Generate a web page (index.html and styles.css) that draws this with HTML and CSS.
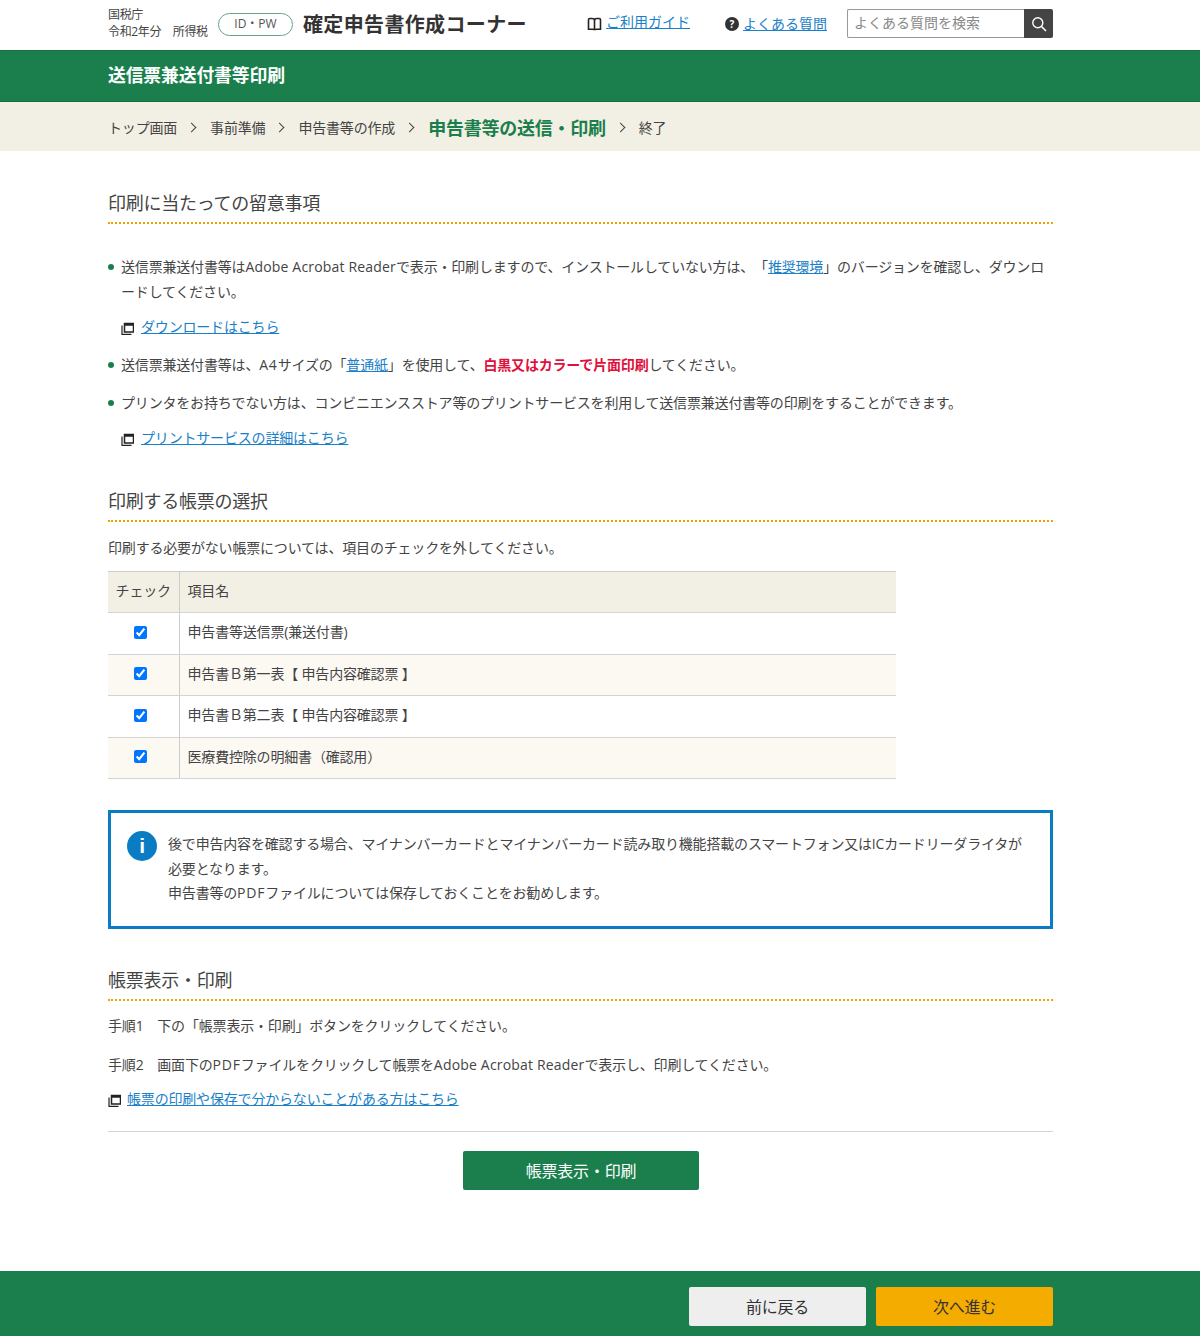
FILE: index.html
```html
<!DOCTYPE html>
<html lang="ja">
<head>
<meta charset="utf-8">
<title>送信票兼送付書等印刷</title>
<link rel="stylesheet" href="styles.css">
</head>
<body>
<div class="page">
  <header class="top">
    <div class="wrap top-in">
      <div class="agency"><div>国税庁</div><div>令和2年分　所得税</div></div>
      <span class="pill">ID・PW</span>
      <div class="site">確定申告書作成コーナー</div>
      <a class="tool guide" href="#"><svg class="tool-ic" viewBox="0 0 15 14" width="15" height="14"><path d="M7.500 3.500C7.500 2 6.500 1.500 5 1.500H2.800C2 1.500 1.500 2 1.500 2.800V12.200H5.500C6.800 12.200 7.500 12.700 7.500 13.300C7.500 12.700 8.200 12.200 9.500 12.200H13.500V2.800C13.500 2 13 1.500 12.200 1.500H10C8.500 1.500 7.500 2 7.500 3.500ZM7.500 3.500V13" fill="none" stroke="#222" stroke-width="1.600"/></svg><span class="lnk up">ご利用ガイド</span></a>
      <a class="tool faq" href="#"><span class="q">?</span><span class="lnk">よくある質問</span></a>
      <form class="search">
        <input class="search-in" type="text" placeholder="よくある質問を検索">
        <button class="search-btn" type="button" aria-label="検索"><svg viewBox="0 0 16 16" width="16" height="16"><circle cx="6.800" cy="6.800" r="5" fill="none" stroke="#fff" stroke-width="1.400"/><path d="M10.500 10.500L15 15" stroke="#fff" stroke-width="1.600"/></svg></button>
      </form>
    </div>
  </header>
  <div class="band"><div class="wrap"><h1 class="band-title">送信票兼送付書等印刷</h1></div></div>
  <nav class="crumbs">
    <div class="wrap crumbs-in">
      <span>トップ画面</span><i class="chev"></i>
      <span>事前準備</span><i class="chev"></i>
      <span>申告書等の作成</span><i class="chev"></i>
      <strong class="now">申告書等の送信・印刷</strong><i class="chev"></i>
      <span>終了</span>
    </div>
  </nav>
  <main class="wrap main">
    <h2 class="head first">印刷に当たっての留意事項</h2>
    <ul class="notes">
      <li>送信票兼送付書等は<span class="en">Adobe Acrobat Reader</span>で表示・印刷しますので、インストールしていない方は、「<a href="#">推奨環境</a>」のバージョンを確認し、ダウンロードしてください。
        <p class="ext"><svg class="win" viewBox="0 0 13 13" width="13" height="13"><path d="M3.500 1.500h9v8.500h-9zM3.500 3h9" fill="none" stroke="#222" stroke-width="1.500"/><path d="M1 3.500V12.300h9.500" fill="none" stroke="#222" stroke-width="1.200"/></svg><a href="#">ダウンロードはこちら</a></p></li>
      <li>送信票兼送付書等は、<span class="en2">A4</span>サイズの「<a href="#">普通紙</a>」を使用して、<strong class="red">白黒又はカラーで片面印刷</strong>してください。</li>
      <li>プリンタをお持ちでない方は、コンビニエンスストア等のプリントサービスを利用して送信票兼送付書等の印刷をすることができます。
        <p class="ext"><svg class="win" viewBox="0 0 13 13" width="13" height="13"><path d="M3.500 1.500h9v8.500h-9zM3.500 3h9" fill="none" stroke="#222" stroke-width="1.500"/><path d="M1 3.500V12.300h9.500" fill="none" stroke="#222" stroke-width="1.200"/></svg><a href="#">プリントサービスの詳細はこちら</a></p></li>
    </ul>
    <h2 class="head second">印刷する帳票の選択</h2>
    <p class="lead">印刷する必要がない帳票については、項目のチェックを外してください。</p>
    <table class="forms">
      <thead><tr><th class="c1">チェック</th><th>項目名</th></tr></thead>
      <tbody>
        <tr><td class="c1"><input type="checkbox" checked></td><td>申告書等送信票(兼送付書)</td></tr>
        <tr class="alt"><td class="c1"><input type="checkbox" checked></td><td>申告書Ｂ第一表【 申告内容確認票 】</td></tr>
        <tr><td class="c1"><input type="checkbox" checked></td><td>申告書Ｂ第二表【 申告内容確認票 】</td></tr>
        <tr class="alt"><td class="c1"><input type="checkbox" checked></td><td>医療費控除の明細書（確認用）</td></tr>
      </tbody>
    </table>
    <div class="info">
      <span class="info-ic">i</span>
      <p>後で申告内容を確認する場合、マイナンバーカードとマイナンバーカード読み取り機能搭載のスマートフォン又はICカードリーダライタが必要となります。<br>申告書等の<span class="en2">PDF</span>ファイルについては保存しておくことをお勧めします。</p>
    </div>
    <h2 class="head third">帳票表示・印刷</h2>
    <p class="step">手順1　下の「帳票表示・印刷」ボタンをクリックしてください。</p>
    <p class="step">手順2　画面下の<span class="en2">PDF</span>ファイルをクリックして帳票を<span class="en">Adobe Acrobat Reader</span>で表示し、印刷してください。</p>
    <p class="ext flush"><svg class="win" viewBox="0 0 13 13" width="13" height="13"><path d="M3.500 1.500h9v8.500h-9zM3.500 3h9" fill="none" stroke="#222" stroke-width="1.500"/><path d="M1 3.500V12.300h9.500" fill="none" stroke="#222" stroke-width="1.200"/></svg><a href="#">帳票の印刷や保存で分からないことがある方はこちら</a></p>
    <div class="act"><button class="print" type="button">帳票表示・印刷</button></div>
  </main>
  <footer class="foot">
    <div class="wrap foot-in">
      <button class="fbtn back" type="button">前に戻る</button>
      <button class="fbtn next" type="button">次へ進む</button>
    </div>
  </footer>
</div>
</body>
</html>
```

FILE: styles.css
```css
* { box-sizing: border-box; }
html, body { margin: 0; padding: 0; }
body {
  font-family: "Open Sans", "Noto Sans CJK JP", sans-serif;
  font-size: 14px;
  color: #444;
  background: #fff;
  letter-spacing: -0.18px;
  text-spacing-trim: space-all;
}
a { color: #1a80c8; text-decoration: underline; }
.en { letter-spacing: 0.18px; }
.en2 { letter-spacing: 0.8px; }
.page { min-height: 1336px; display: flex; flex-direction: column; }
.wrap { width: 945px; margin-left: 108px; }

.top { height: 50px; }
.top-in { display: flex; align-items: center; height: 48px; }
.agency { font-size: 12px; line-height: 17px; width: 110px; color: #444; letter-spacing: -0.35px; white-space: nowrap; margin-top: -2px; }
.pill { width: 75px; height: 23px; border: 1.500px solid #62a883; border-radius: 12px; font-size: 12px; line-height: 20px; text-align: center; color: #555; letter-spacing: 0; }
.site { font-size: 20px; font-weight: 700; color: #333; margin-left: 10px; width: 284px; white-space: nowrap; letter-spacing: 0.35px; padding-bottom: 2px; }
.tool { display: flex; align-items: center; text-decoration: none; font-size: 14px; letter-spacing: 0; }
.lnk { color: #1a80c8; text-decoration: underline; padding-bottom: 2px; }
.lnk.up { padding-bottom: 6px; }
.guide { width: 138px; gap: 4px; }
.faq { width: 122px; gap: 4px; }
.q { width: 14px; height: 14px; border-radius: 50%; background: #333; color: #fff; font-size: 10px; font-weight: 700; line-height: 14px; text-align: center; }
.search { display: flex; width: 206px; height: 29px; margin-top: -1px; }
.search-in { width: 177px; height: 29px; border: 1px solid #999; border-right: 0; border-radius: 2px 0 0 2px; padding: 0 6px 3px; font: 14px "Open Sans", "Noto Sans CJK JP", sans-serif; letter-spacing: 0; }
.search-in::placeholder { color: #888; opacity: 1; }
.search-btn { width: 30px; height: 29px; border: 0; padding: 0; background: #444; border-radius: 0 2px 2px 0; display: flex; align-items: center; justify-content: center; }

.band { height: 52px; background: #1b7f4d; border-top: 1px solid #157040; border-bottom: 1px solid #157040; display: flex; align-items: center; padding-bottom: 4px; }
.band-title { margin: 0; color: #fff; font-size: 17.800px; font-weight: 700; letter-spacing: -0.1px; }

.crumbs { height: 49px; background: #f2efe5; }
.crumbs-in { display: flex; align-items: center; height: 100%; color: #444; white-space: nowrap; }
.now { color: #1b7f4d; font-size: 18px; letter-spacing: -0.25px; }
.chev { display: block; width: 7px; height: 7px; border-top: 1.500px solid #444; border-right: 1.500px solid #444; transform: rotate(45deg); margin: 1px 15px 0 11px; }

.main { flex: 1; }
.head { margin: 0; font-size: 18px; font-weight: 400; line-height: 26px; color: #444; padding-bottom: 6px; border-bottom: 2px dotted #f0a000; letter-spacing: -0.25px; }
.head.first { margin-top: 39px; }
.head.second { margin-top: 38px; }
.head.third { margin-top: 38px; }

.notes { list-style: none; margin: 30px 0 0; padding: 0; }
.notes li { position: relative; padding-left: 13px; line-height: 25px; margin-bottom: 13px; }
.notes li::before { content: ""; position: absolute; left: 0; top: 10px; width: 6px; height: 6px; border-radius: 50%; background: #1b7f4d; }
.ext { margin: 10px 0 0; line-height: 25px; display: flex; align-items: center; gap: 7px; }
.win { flex: none; margin-top: 3px; }
.flush { margin-top: 9px; gap: 6px; }
.red { color: #e0103c; }

.lead { margin: 13px 0 11px; line-height: 25px; }
.forms { width: 788px; border-collapse: collapse; border-top: 1px solid #ccc; }
.forms th, .forms td { height: 41.500px; padding: 0 8px 4px; border-bottom: 1.500px solid #d4d4d4; text-align: left; font-weight: 400; }
.forms th { height: 41px; background: #f2efe5; font-size: 14px; }
.forms .c1 { width: 71px; text-align: center; border-right: 1px solid #ccc; padding: 0 0 4px; }
.forms td.c1 { padding: 0 6px 6px 0; }
.forms input { width: 13px; height: 13px; margin: 0; accent-color: #0075ff; vertical-align: middle; }
.alt td { background: #fcf9f3; }

.info { margin-top: 31px; height: 119px; border: 3px solid #0a7cc4; display: flex; padding: 18px 16px; gap: 11px; }
.info-ic { flex: none; width: 30px; height: 30px; border-radius: 50%; background: #0a7cc4; color: #fff; font: 700 21px/30px "Liberation Sans", sans-serif; text-align: center; }
.info p { margin: 0; line-height: 24.500px; padding-top: 1px; }

.step { margin: 14px 0 0; line-height: 25px; }
.third + .step { margin-top: 12px; }

.act { border-top: 1px solid #d4d4d4; margin-top: 20px; padding-top: 19px; padding-left: 355px; }
.print { width: 236px; height: 39px; border: 0; border-radius: 2px; background: #1b7f4d; color: #fff; font: 16px "Open Sans", "Noto Sans CJK JP", sans-serif; letter-spacing: -0.2px; padding: 0 0 2px; }

.foot { height: 65px; background: #1b7f4d; }
.foot-in { display: flex; justify-content: flex-end; gap: 10px; padding-top: 16px; }
.fbtn { width: 177px; height: 39px; border: 0; border-radius: 2px; font: 16px "Open Sans", "Noto Sans CJK JP", sans-serif; color: #333; letter-spacing: -0.2px; padding: 0 0 2px; }
.back { background: #eee; }
.next { background: #f5ac00; }
```
